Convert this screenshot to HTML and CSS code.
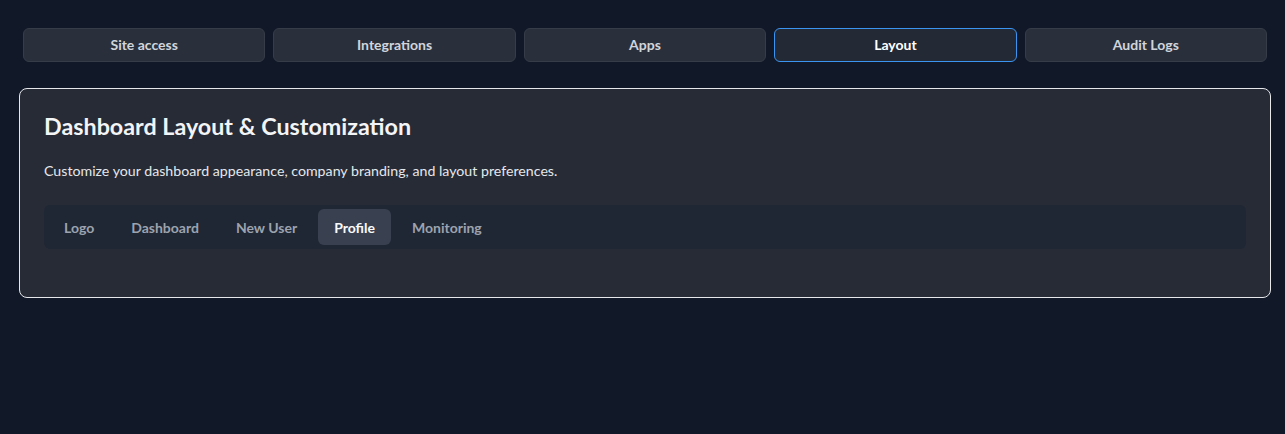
FILE: index.html
```html
<!DOCTYPE html>
<html lang="en">
<head>
<meta charset="utf-8">
<title>Layout settings</title>
<link rel="stylesheet" href="styles.css">
</head>
<body>
<div class="page">
  <nav class="top-tabs">
    <button class="top-tab">Site access</button>
    <button class="top-tab">Integrations</button>
    <button class="top-tab">Apps</button>
    <button class="top-tab active">Layout</button>
    <button class="top-tab">Audit Logs</button>
  </nav>
  <section class="card">
    <h1 class="card-title">Dashboard Layout &amp; Customization</h1>
    <p class="card-desc">Customize your dashboard appearance, company branding, and layout preferences.</p>
    <div class="sub-tabs">
      <button class="sub-tab">Logo</button>
      <button class="sub-tab">Dashboard</button>
      <button class="sub-tab">New User</button>
      <button class="sub-tab active">Profile</button>
      <button class="sub-tab">Monitoring</button>
    </div>
    <div class="card-body"></div>
  </section>
</div>
</body>
</html>
```

FILE: styles.css
```css
* { box-sizing: border-box; }
html, body {
  margin: 0;
  padding: 0;
  background: #111827;
  font-family: "Lato", "Segoe UI", "Noto Sans", sans-serif;
  color: #e5e7eb;
}
.page {
  padding: 28px 14px 0 19px;
}
.top-tabs {
  display: grid;
  grid-template-columns: repeat(5, 1fr);
  gap: 8px;
  margin: 0 4px 0 4px;
}
.top-tab {
  height: 34px;
  padding: 0 0 1px 0;
  background: #2a303b;
  border: 1px solid #363c48;
  border-radius: 6px;
  color: #d1d5db;
  font-family: inherit;
  font-size: 14px;
  font-weight: 700;
  cursor: pointer;
}
.top-tab.active {
  background: #232935;
  border-color: #3b94f0;
  color: #ffffff;
}
.card {
  margin-top: 26px;
  background: #262b36;
  border: 1px solid #e5e7eb;
  border-radius: 8px;
  padding: 23px 24px 0 24px;
  width: 1252px;
}
.card-title {
  margin: 0;
  font-size: 23.3px;
  line-height: 28px;
  font-weight: 700;
  color: #f3f4f6;
}
.card-desc {
  margin: 21px 0 0 0;
  font-size: 14.2px;
  line-height: 20px;
  color: #e5e7eb;
}
.sub-tabs {
  margin-top: 24px;
  display: flex;
  align-items: center;
  background: #202734;
  border-radius: 6px;
  padding: 4px;
  height: 44px;
}
.sub-tab {
  background: transparent;
  border: 0;
  border-radius: 6px;
  height: 36px;
  padding: 0 16px;
  color: #9ca3af;
  font-family: inherit;
  font-size: 14px;
  font-weight: 700;
  margin-right: 5px;
}
.sub-tab.active {
  background: #394150;
  color: #f9fafb;
}
.card-body {
  height: 48px;
}
```
